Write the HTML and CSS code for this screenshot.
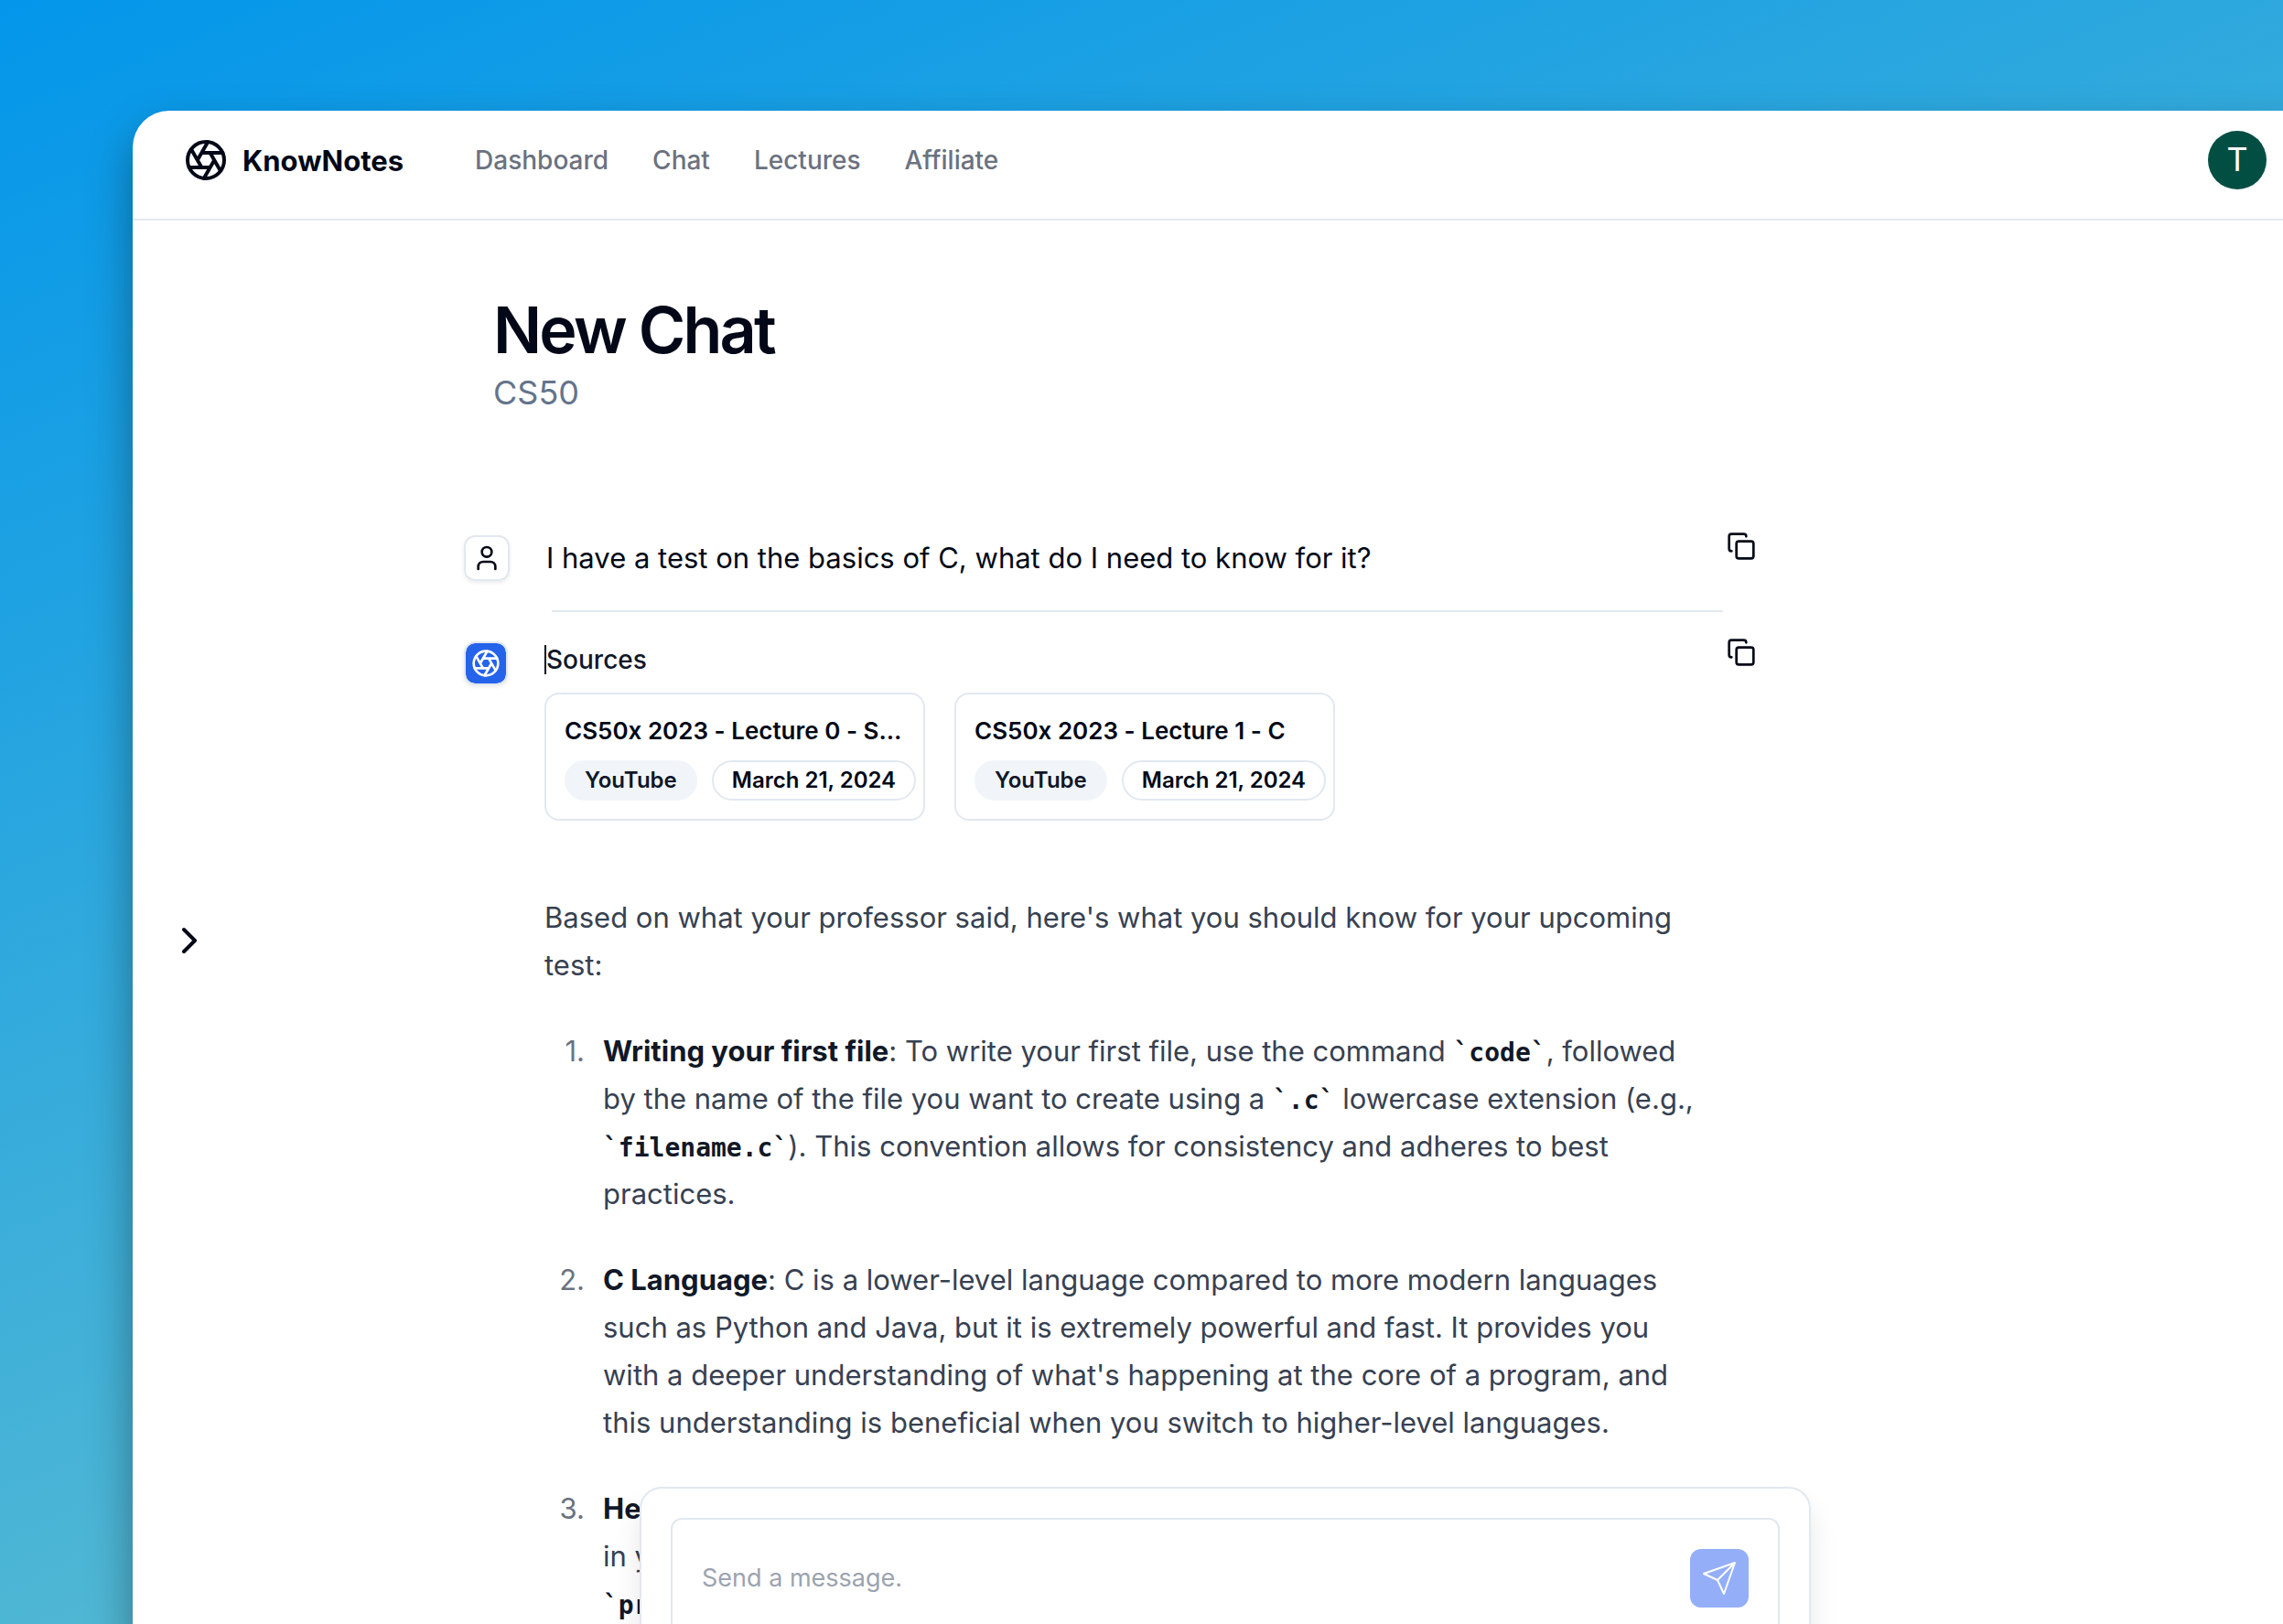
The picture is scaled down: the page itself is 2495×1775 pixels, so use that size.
FILE: index.html
```html
<!DOCTYPE html>
<html lang="en">
<head>
<meta charset="utf-8">
<title>KnowNotes - New Chat</title>
<link rel="stylesheet" href="styles.css">
</head>
<body>
<svg width="0" height="0" class="sprite" aria-hidden="true">
  <symbol id="aperture" viewBox="0 0 24 24"><circle cx="12" cy="12" r="10"/><path d="m14.31 8 5.74 9.94M9.69 8h11.48M7.38 12l5.74-9.94M9.69 16 3.95 6.06M14.31 16H2.83M16.62 12l-5.74 9.94"/></symbol>
  <symbol id="copy" viewBox="0 0 24 24"><rect x="8" y="8" width="14" height="14" rx="2"/><path d="M4 16c-1.1 0-2-.9-2-2V4c0-1.1.9-2 2-2h10c1.1 0 2 .9 2 2"/></symbol>
</svg>
<div class="window">
  <header class="topbar">
    <a class="brand" href="#"><svg class="icon icon-lg"><use href="#aperture"/></svg>KnowNotes</a>
    <nav class="nav">
      <a href="#">Dashboard</a>
      <a href="#">Chat</a>
      <a href="#">Lectures</a>
      <a href="#">Affiliate</a>
    </nav>
    <button class="profile" type="button" aria-label="Account">T</button>
  </header>
  <main class="main">
    <aside class="rail">
      <button class="plain" type="button" aria-label="Open sidebar"><svg class="icon icon-lg" viewBox="0 0 24 24"><path d="m9 18 6-6-6-6"/></svg></button>
    </aside>
    <section class="thread">
      <div class="heading">
        <h1>New Chat</h1>
        <p>CS50</p>
      </div>
      <article class="message question">
        <span class="avatar"><svg class="icon" viewBox="0 0 24 24"><path d="M19 21v-2a4 4 0 0 0-4-4H9a4 4 0 0 0-4 4v2"/><circle cx="12" cy="7" r="4"/></svg></span>
        <p class="prompt">I have a test on the basics of C, what do I need to know for it?</p>
        <button class="plain" type="button" aria-label="Copy message"><svg class="icon"><use href="#copy"/></svg></button>
      </article>
      <hr class="divider">
      <article class="message">
        <span class="avatar avatar-bot"><svg class="icon"><use href="#aperture"/></svg></span>
        <div class="answer">
          <h2 class="sources-title">Sources</h2>
          <div class="sources">
            <a class="source" href="#">
              <span class="source-name">CS50x 2023 - Lecture 0 - Scratch</span>
              <span class="badges"><span class="badge badge-soft">YouTube</span><span class="badge">March 21, 2024</span></span>
            </a>
            <a class="source" href="#">
              <span class="source-name">CS50x 2023 - Lecture 1 - C</span>
              <span class="badges"><span class="badge badge-soft">YouTube</span><span class="badge">March 21, 2024</span></span>
            </a>
          </div>
          <div class="prose">
            <p>Based on what your professor said, here's what you should know for your upcoming test:</p>
            <ol>
              <li><div><strong>Writing your first file</strong>: To write your first file, use the command <code>`code`</code>, followed by the name of the file you want to create using a <code>`.c`</code> lowercase extension (e.g., <code>`filename.c`</code>). This convention allows for consistency and adheres to best practices.</div></li>
              <li><div><strong>C Language</strong>: C is a lower-level language compared to more modern languages such as Python and Java, but it is extremely powerful and fast. It provides you with a deeper understanding of what's happening at the core of a program, and this understanding is beneficial when you switch to higher-level languages.</div></li>
              <li><div><strong>He</strong><br>in y<br><code>`pr</code></div></li>
            </ol>
          </div>
        </div>
        <button class="plain" type="button" aria-label="Copy message"><svg class="icon"><use href="#copy"/></svg></button>
      </article>
    </section>
    <form class="composer">
      <div class="field">
        <textarea aria-label="Message" placeholder="Send a message."></textarea>
        <button class="send" type="button" aria-label="Send message"><svg viewBox="0 0 64 64"><path d="M15 27 49 15 37 49 30 34ZM30 34 49 15"/></svg></button>
      </div>
    </form>
  </main>
</div>
</body>
</html>
```

FILE: styles.css
```css
* { box-sizing: border-box; }

body {
  margin: 0;
  height: 100vh;
  overflow: hidden;
  padding: 121px 0 0 145px;
  background: linear-gradient(158deg, #0396ea, #78c8c8);
  font-family: Inter, "Liberation Sans", sans-serif;
  font-variant-ligatures: no-contextual;
  color: #020817;
}

h1, h2, p, ol { margin: 0; }
a { color: inherit; text-decoration: none; }
button { font: inherit; border: 0; padding: 0; cursor: pointer; }
.sprite { position: absolute; }

.icon {
  display: block;
  width: 32px;
  height: 32px;
  fill: none;
  stroke: currentColor;
  stroke-width: 2;
  stroke-linecap: round;
  stroke-linejoin: round;
}
.icon-lg { width: 48px; height: 48px; }
.plain { background: none; color: inherit; }

/* The window bleeds past the right and bottom edges of the page. */
.window {
  display: flex;
  flex-direction: column;
  width: calc(100% + 38px);
  height: calc(100% + 40px);
  border-radius: 40px;
  background: #fff;
  box-shadow: 0 24px 48px rgba(0, 0, 0, .36);
}

.topbar {
  display: flex;
  align-items: center;
  height: 120px;
  padding: 0 56px 10px 56px;
  border-bottom: 2px solid #e2e8f0;
}
.brand {
  display: flex;
  align-items: center;
  gap: 16px;
  font-size: 31px;
  font-weight: 700;
}
.nav {
  display: flex;
  gap: 48px;
  margin-left: 78px;
  font-size: 28px;
  font-weight: 500;
  color: #6b7280;
}
.profile {
  width: 64px;
  height: 64px;
  margin-left: auto;
  border-radius: 50%;
  background: #024e43;
  color: #fff;
  font-family: Roboto, sans-serif;
  font-size: 36px;
}

.main {
  position: relative;
  display: flex;
  flex: 1;
  min-height: 0;
  overflow: hidden;
}
.rail {
  display: flex;
  align-items: center;
  flex: 0 0 362px;
  padding-left: 38px;
}

.thread { flex: 0 1 1412px; padding-top: 80px; }
.heading { padding-left: 32px; }
h1 { font-size: 70px; line-height: 80px; font-weight: 600; letter-spacing: -0.04em; }
.heading p { font-size: 36px; line-height: 56px; color: #64748b; }

.message { display: flex; align-items: flex-start; }
.message > .plain { margin-left: auto; }
.question { margin-top: 124px; }
.avatar {
  display: grid;
  place-items: center;
  width: 50px;
  height: 50px;
  margin: 4px 40px 0 0;
  border: 2px solid #e2e8f0;
  border-radius: 12px;
  box-shadow: 0 2px 4px rgba(0, 0, 0, .08);
}
.avatar-bot {
  width: 48px;
  height: 48px;
  background: #2563eb;
  background-clip: padding-box;
  color: #fff;
}
.prompt { padding-top: 4px; font-size: 31px; line-height: 50px; }
.divider {
  height: 2px;
  margin: 32px 36px 28px 96px;
  border: 0;
  background: #e2e8f0;
}

.answer { width: 1272px; }
.sources-title {
  margin: 8px 0 20px;
  border-left: 2px solid #020817;
  font-size: 28px;
  line-height: 32px;
  font-weight: 500;
  color: #0f172a;
}
.sources { display: flex; gap: 32px; }
.source {
  width: 416px;
  height: 140px;
  padding: 24px 8px 20px 20px;
  border: 2px solid #e2e8f0;
  border-radius: 16px;
}
.source-name {
  display: block;
  width: 376px;
  overflow: hidden;
  font-size: 26px;
  line-height: 32px;
  font-weight: 600;
  white-space: nowrap;
  text-overflow: ellipsis;
}
.badges { display: flex; gap: 16px; margin-top: 16px; }
.badge {
  padding: 0 20px;
  border: 2px solid #e2e8f0;
  border-radius: 22px;
  font-size: 24px;
  line-height: 40px;
  font-weight: 600;
  white-space: nowrap;
}
.badge-soft { border-color: #f1f5f9; background: #f1f5f9; color: #0f172a; }

.prose { padding-top: 80px; font-size: 31px; line-height: 52px; color: #374151; }
.prose ol { padding: 0; list-style: none; counter-reset: item; }
.prose li {
  display: grid;
  grid-template-columns: 44px 1fr;
  column-gap: 20px;
  margin-top: 42px;
  counter-increment: item;
}
.prose li::before { content: counter(item) "."; text-align: right; color: #6b7280; }
.prose strong { font-weight: 700; color: #111827; }
.prose code { font: bold 28px/1 "DejaVu Sans Mono", monospace; color: #111827; }

.composer {
  position: absolute;
  bottom: 0;
  left: 0;
  right: 0;
  width: 1280px;
  height: 190px;
  margin: 0 auto;
  padding: 32px 32px 0;
  border: 2px solid #e2e8f0;
  border-bottom: 0;
  border-radius: 24px 24px 0 0;
  background: #fff;
  box-shadow: 0 20px 30px rgba(0, 0, 0, .1);
}
.field {
  display: flex;
  align-items: flex-start;
  height: 156px;
  padding: 32px 32px 0;
  border: 2px solid #e2e8f0;
  border-bottom: 0;
  border-radius: 12px 12px 0 0;
}
textarea {
  flex: 1;
  height: 100px;
  padding: 12px 0;
  border: 0;
  outline: 0;
  resize: none;
  background: none;
  font: 27px/40px Inter, sans-serif;
  color: #020817;
}
textarea::placeholder { color: #9ca3af; opacity: 1; }
.send { width: 64px; height: 64px; border-radius: 12px; background: #94aff8; }
.send svg { display: block; fill: none; stroke: #fff; stroke-width: 2; stroke-linejoin: round; }
```
